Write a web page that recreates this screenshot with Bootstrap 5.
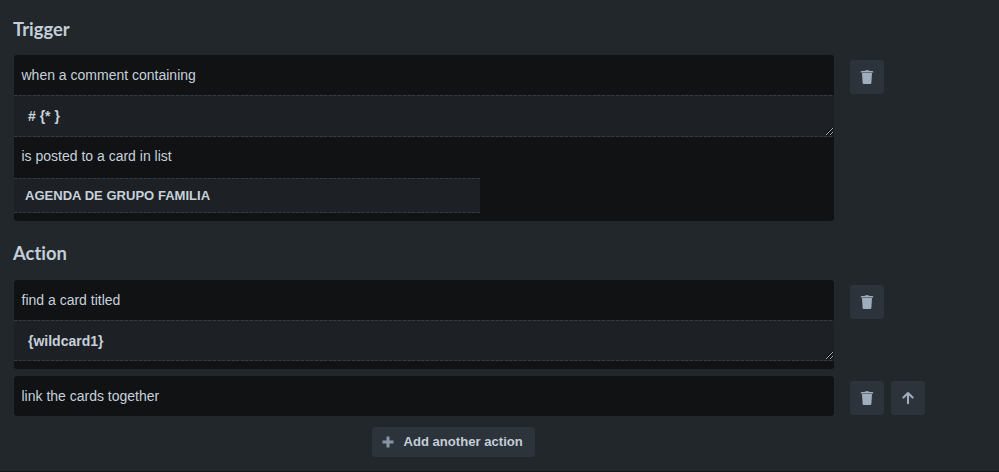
<!DOCTYPE html>
<html lang="en" data-bs-theme="dark">
<head>
<meta charset="utf-8">
<meta name="viewport" content="width=device-width, initial-scale=1">
<title>Automation rule</title>
<link href="https://cdn.jsdelivr.net/npm/bootstrap@5.3.0/dist/css/bootstrap.min.css" rel="stylesheet">
<style>
body { background: #22272b; color: #c7d1db; font: 14px/20px "Liberation Sans", Arial, sans-serif; height: 472px; overflow: hidden; border-bottom: 1px solid #17191d; }
.rule-heading { font: 700 18.4px/24px Lato, sans-serif; font-variant-ligatures: none; margin: 0; color: #c3ced9; }
.rule-gap { gap: 16px; margin: 14px 0 0 1px; }
.rule-first { margin-top: 15px; }
.rule-follow { margin-top: 7px; }
.rule-next { margin-top: 20px; }
.rule-panel { width: 820px; background: #101214; border-radius: 3px; flex: none; }
.rule-line { padding: 10px 7.5px; height: 40px; }
.rule-field { --dash: repeating-linear-gradient(90deg, #333c45 0 3px, #20262b 3px 4.63px);
  background: var(--dash) top / 100% 1px no-repeat, var(--dash) bottom / 100% 1px no-repeat, #1d2125; font-weight: 700; }
.field-text { height: 42px; padding: 11px 14px; font-size: 14px; position: relative; }
.field-short { height: 41px; }
.line-mid { padding-top: 9px; height: 41px; }
.field-list { width: 466px; height: 35px; padding: 8px 11px; font-size: 13.05px; }
.grip { position: absolute; right: 0; bottom: 1px; }
.tool-btn { width: 34px; height: 34px; padding: 0; border: 0; border-radius: 3px; background: #2c333a; color: #9fadbc; }
.tool-btn svg { margin-right: 1px; }
.add-btn { width: 163px; height: 30px; border: 0; border-radius: 3px; background: #2c333a; color: #c3ced9; font: 700 13.1px/20px "Liberation Sans", Arial, sans-serif; padding: 0 10px; gap: 10px; }
.page-pad { padding: 17px 13px 0; }
.tools { padding-top: 5px; gap: 7px; }
.add-row { width: 880px; margin-top: 11px; }
</style>
<script src="https://cdn.jsdelivr.net/npm/bootstrap@5.3.0/dist/js/bootstrap.bundle.min.js"></script>
</head>
<body>
<svg class="d-none" xmlns="http://www.w3.org/2000/svg">
  <symbol id="trash" viewBox="0 0 14 14"><path fill="currentColor" d="M.8 1.9Q.8 1.1 1.6 1H4.7Q5 .2 5.6.2H8.4Q9 .2 9.3 1H12.4Q13.2 1.1 13.2 1.9V2.4H.8ZM2 3.1H12L11.4 12.7Q11.3 14 10.1 14H3.9Q2.7 14 2.6 12.7Z"/></symbol>
  <symbol id="arrow" viewBox="0 0 14 14"><path d="M7 12.2V2.4M2.4 6.6 7 2l4.6 4.6" fill="none" stroke="currentColor" stroke-width="2.1" stroke-linecap="round" stroke-linejoin="round"/></symbol>
  <symbol id="grip" viewBox="0 0 9 9"><path d="M1 8 8 1M5 8 8 5" fill="none" stroke="#08090a" stroke-width="2"/><path d="M1 8 8 1M5 8 8 5" fill="none" stroke="#a9adb0" stroke-width="1"/></symbol>
</svg>
<main class="page-pad">
  <h2 class="rule-heading">Trigger</h2>
  <div class="d-flex align-items-start rule-gap">
    <section class="rule-panel overflow-hidden pb-2">
      <div class="rule-line">when a comment containing</div>
      <div class="rule-field field-text"># {* }<svg class="grip" width="9" height="9"><use href="#grip"/></svg></div>
      <div class="rule-line line-mid">is posted to a card in list</div>
      <div class="rule-field field-list">AGENDA DE GRUPO FAMILIA</div>
    </section>
    <div class="d-flex tools"><button class="btn tool-btn d-flex align-items-center justify-content-center" aria-label="Delete trigger"><svg width="14" height="14"><use href="#trash"/></svg></button></div>
  </div>
  <h2 class="rule-heading rule-next">Action</h2>
  <div class="d-flex align-items-start rule-gap rule-first">
    <section class="rule-panel overflow-hidden pb-2">
      <div class="rule-line">find a card titled</div>
      <div class="rule-field field-text field-short">{wildcard1}<svg class="grip" width="9" height="9"><use href="#grip"/></svg></div>
    </section>
    <div class="d-flex tools"><button class="btn tool-btn d-flex align-items-center justify-content-center" aria-label="Delete action"><svg width="14" height="14"><use href="#trash"/></svg></button></div>
  </div>
  <div class="d-flex align-items-start rule-gap rule-follow">
    <section class="rule-panel"><div class="rule-line">link the cards together</div></section>
    <div class="d-flex tools">
      <button class="btn tool-btn d-flex align-items-center justify-content-center" aria-label="Delete action"><svg width="14" height="14"><use href="#trash"/></svg></button>
      <button class="btn tool-btn d-flex align-items-center justify-content-center" aria-label="Move up"><svg width="14" height="14"><use href="#arrow"/></svg></button>
    </div>
  </div>
  <div class="d-flex justify-content-center add-row">
    <button class="btn add-btn d-flex align-items-center text-nowrap"><svg width="12" height="12" viewBox="0 0 12 12"><path d="M6 .5v11M.5 6h11" stroke="#8696a7" stroke-width="3"/></svg><span>Add another action</span></button>
  </div>
</main>
</body>
</html>
